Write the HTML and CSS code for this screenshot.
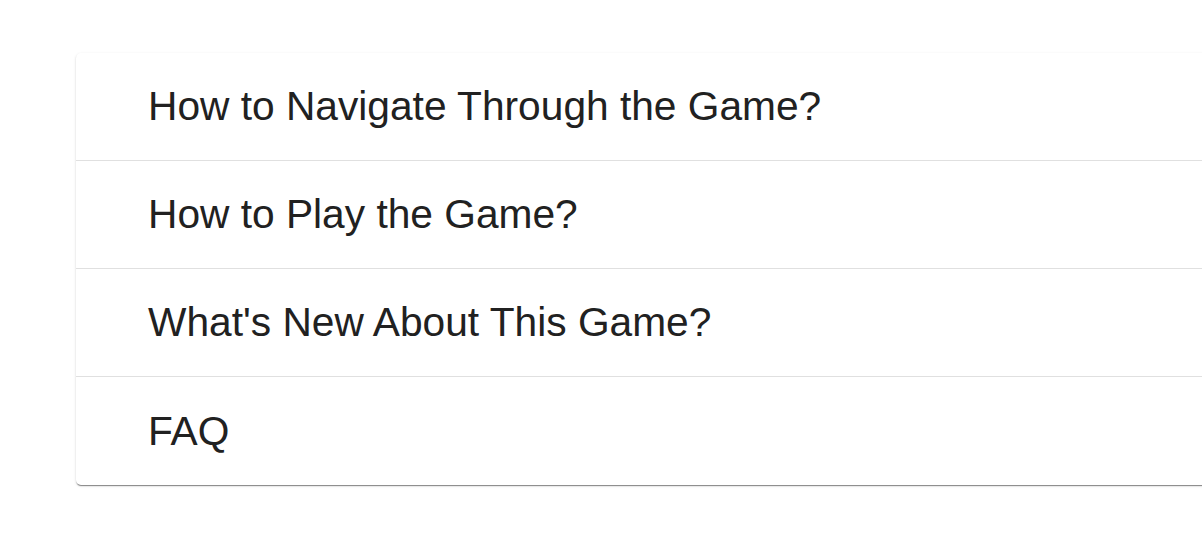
FILE: index.html
```html
<!DOCTYPE html>
<html lang="en">
<head>
<meta charset="utf-8">
<title>Game Help</title>
<link rel="stylesheet" href="styles.css">
</head>
<body>
<div class="page">
  <ul class="card">
    <li class="item">How to Navigate Through the Game?</li>
    <li class="item">How to Play the Game?</li>
    <li class="item">What's New About This Game?</li>
    <li class="item">FAQ</li>
  </ul>
</div>
</body>
</html>
```
FILE: styles.css
```css
html, body {
  margin: 0;
  padding: 0;
  background: #ffffff;
}
.page {
  padding: 53px 0 20px 76px;
  overflow: hidden;
}
.card {
  list-style: none;
  margin: 0 -60px 0 0;
  padding: 0;
  background: #fff;
  border-radius: 5px;
  box-shadow: 0 2px 1px -1px rgba(0,0,0,0.3), 0 1px 1px 0 rgba(0,0,0,0.18), 0 1px 3px 0 rgba(0,0,0,0.12);
  font-family: "Liberation Sans", Arial, sans-serif;
  color: #212121;
}
.item {
  height: 107px;
  display: flex;
  align-items: center;
  padding-left: 72px;
  font-size: 40.7px;
  border-bottom: 1px solid #e0e0e0;
}
.item:last-child {
  border-bottom: none;
  height: 108px;
}
```
